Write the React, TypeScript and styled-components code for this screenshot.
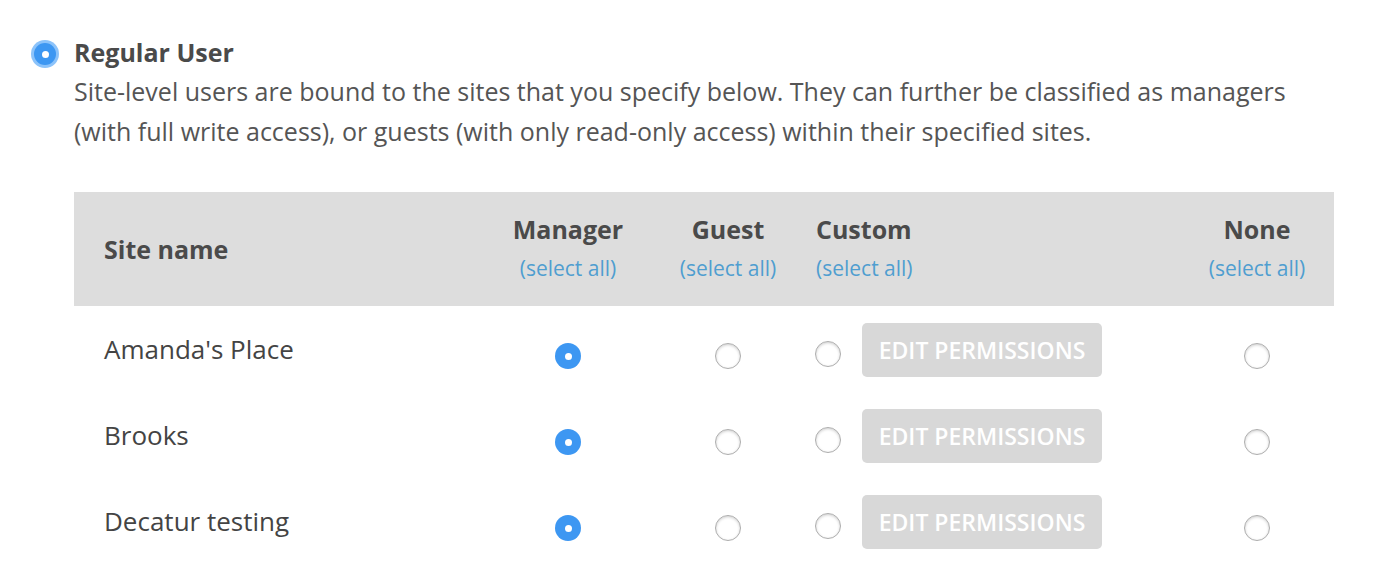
import React from "react";
import styled, { createGlobalStyle } from "styled-components";

const Global = createGlobalStyle`
  html, body { margin: 0; padding: 0; background: #fff; }
  body { font-family: "Open Sans", "Noto Sans", sans-serif; color: #555; }
`;

const Page = styled.div`
  display: flex;
  align-items: flex-start;
  padding: 36px 0 0 34px;
  gap: 18px;
`;

const TopRadio = styled.span`
  flex: none;
  margin-top: 7px;
  width: 22px;
  height: 22px;
  border-radius: 50%;
  background: #3d97f2;
  box-shadow: 0 0 0 3px #8cc3fa;
  display: flex;
  align-items: center;
  justify-content: center;
  &::after {
    content: "";
    width: 7px;
    height: 7px;
    border-radius: 50%;
    background: #fff;
  }
`;

const Content = styled.div`
  display: flex;
  flex-direction: column;
`;

const Title = styled.div`
  font-size: 25px;
  font-weight: 700;
  color: #4a4a4a;
  line-height: 32px;
`;

const Desc = styled.p`
  margin: 3px 0 0;
  font-size: 25px;
  line-height: 40px;
  color: #555;
  width: 1260px;
`;

const Table = styled.table`
  margin-top: 41px;
  width: 1260px;
  border-collapse: collapse;
  table-layout: fixed;
`;

const HeadRow = styled.tr`
  background: #dddddd;
  height: 114px;
`;

const Th = styled.th<{ $align?: string; $w: number; $pl?: number }>`
  box-sizing: border-box;
  width: ${(p) => p.$w}px;
  text-align: ${(p) => p.$align || "center"};
  padding: 0 0 0 ${(p) => p.$pl || 0}px;
  vertical-align: middle;
  font-weight: 700;
  font-size: 25px;
  color: #4a4a4a;
`;

const HeadLabel = styled.div`
  line-height: 30px;
  margin-top: -2px;
`;

const SelectAll = styled.a`
  display: block;
  font-size: 21px;
  font-weight: 400;
  color: #4f9ed0;
  line-height: 28px;
  margin-top: 10px;
  cursor: pointer;
`;

const Row = styled.tr`
  height: 86px;
`;

const Td = styled.td<{ $align?: string; $pl?: number }>`
  box-sizing: border-box;
  text-align: ${(p) => p.$align || "center"};
  padding: 0 0 0 ${(p) => p.$pl || 0}px;
  vertical-align: middle;
  font-size: 26px;
  color: #444;
`;

const SiteName = styled.span`
  display: inline-block;
  margin-top: -4px;
`;

const Radio = styled.span<{ $checked?: boolean }>`
  display: inline-block;
  vertical-align: middle;
  width: 26px;
  height: 26px;
  border-radius: 50%;
  box-sizing: border-box;
  margin-top: 12px;
  position: relative;
  background: ${(p) => (p.$checked ? "#3d97f2" : "#fff")};
  border: ${(p) => (p.$checked ? "none" : "1px solid #adadad")};
  box-shadow: ${(p) =>
    p.$checked ? "none" : "inset 0 1px 3px rgba(0,0,0,0.2)"};
  &::after {
    content: "";
    display: ${(p) => (p.$checked ? "block" : "none")};
    position: absolute;
    left: 50%;
    top: 50%;
    width: 7px;
    height: 7px;
    margin: -3.5px 0 0 -3.5px;
    border-radius: 50%;
    background: #fff;
  }
`;

const CustomCell = styled.div`
  display: flex;
  align-items: center;
  gap: 21px;
`;

const CustomRadio = styled(Radio)`
  margin-top: 10px;
`;

const EditButton = styled.button`
  flex: none;
  width: 240px;
  height: 54px;
  border: none;
  border-radius: 5px;
  background: #d8d8d8;
  color: #fff;
  font-family: "Open Sans", "Noto Sans", sans-serif;
  font-size: 23px;
  font-weight: 600;
  text-transform: uppercase;
  padding: 0;
  margin-top: 2px;
`;

const sites = ["Amanda's Place", "Brooks", "Decatur testing"];

export default function App() {
  return (
    <>
      <Global />
      <Page>
        <TopRadio />
        <Content>
          <Title>Regular User</Title>
          <Desc>
            Site-level users are bound to the sites that you specify below. They can further be classified as managers
            (with full write access), or guests (with only read-only access) within their specified sites.
          </Desc>
          <Table>
            <thead>
              <HeadRow>
                <Th $w={414} $align="left" $pl={30}>Site name</Th>
                <Th $w={160}>
                  <HeadLabel>Manager</HeadLabel>
                  <SelectAll>(select all)</SelectAll>
                </Th>
                <Th $w={160}>
                  <HeadLabel>Guest</HeadLabel>
                  <SelectAll>(select all)</SelectAll>
                </Th>
                <Th $w={372} $align="left" $pl={8}>
                  <HeadLabel>Custom</HeadLabel>
                  <SelectAll>(select all)</SelectAll>
                </Th>
                <Th $w={154}>
                  <HeadLabel>None</HeadLabel>
                  <SelectAll>(select all)</SelectAll>
                </Th>
              </HeadRow>
            </thead>
            <tbody>
              {sites.map((s) => (
                <Row key={s}>
                  <Td $align="left" $pl={30}>
                    <SiteName>{s}</SiteName>
                  </Td>
                  <Td>
                    <Radio $checked />
                  </Td>
                  <Td>
                    <Radio />
                  </Td>
                  <Td $align="left" $pl={7}>
                    <CustomCell>
                      <CustomRadio />
                      <EditButton>Edit Permissions</EditButton>
                    </CustomCell>
                  </Td>
                  <Td>
                    <Radio />
                  </Td>
                </Row>
              ))}
            </tbody>
          </Table>
        </Content>
      </Page>
    </>
  );
}
